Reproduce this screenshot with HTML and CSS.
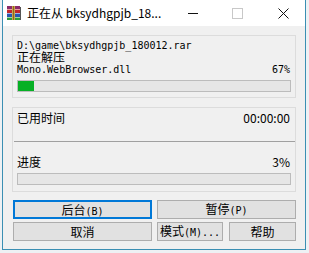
FILE: index.html
```html
<!DOCTYPE html>
<html lang="zh-CN">
<head>
    <meta charset="UTF-8">
    <title>正在从 bksydhgpjb_180012.rar 解压</title>
    <link rel="stylesheet" href="styles.css">
</head>
<body>
    <div class="window">
        <div class="titlebar">
            <svg class="app-icon" width="16" height="16" viewBox="0 0 16 16">
                <rect x="1" y="1" width="13" height="3" fill="#8a2a6a"/>
                <rect x="1" y="4" width="13" height="4" fill="#c0282c"/>
                <rect x="1" y="8" width="13" height="4" fill="#2a56b0"/>
                <rect x="1" y="12" width="13" height="3" fill="#2e9a3c"/>
                <rect x="1" y="4" width="13" height="1" fill="#e8a0a0"/>
                <rect x="1" y="8" width="13" height="1" fill="#9fb6e6"/>
                <rect x="1" y="12" width="13" height="1" fill="#9ed6a4"/>
                <rect x="6" y="1" width="3" height="14" fill="#c9a24a"/>
                <rect x="7" y="1" width="1" height="14" fill="#8a6a20"/>
                <rect x="14" y="2" width="1" height="13" fill="#555"/>
            </svg>
            <span class="title">正在从 bksydhgpjb_18...</span>
            <span class="ctl ctl-min"></span>
            <span class="ctl ctl-max"></span>
            <span class="ctl ctl-close">
                <svg width="11" height="11" viewBox="0 0 11 11"><path d="M0.5 0.5 L10.5 10.5 M10.5 0.5 L0.5 10.5" stroke="#111" stroke-width="1"/></svg>
            </span>
        </div>

        <div class="content">
            <div class="group group-file">
                <div class="mono line line-path">D:\game\bksydhgpjb_180012.rar</div>
                <div class="cn line-action">正在解压</div>
                <div class="mono line row">
                    <span>Mono.WebBrowser.dll</span>
                    <span>67%</span>
                </div>
                <div class="bar"><div class="fill" style="width: 6%"></div></div>
            </div>

            <div class="group group-total">
                <div class="row stat">
                    <span class="label">已用时间</span>
                    <span class="time">00:00:00</span>
                </div>
                <div class="sep"></div>
                <div class="row stat stat-progress">
                    <span class="label">进度</span>
                    <span class="time">3%</span>
                </div>
                <div class="bar"></div>
            </div>

            <div class="buttons">
                <button class="btn default">后台<span class="k">(B)</span></button>
                <button class="btn">暂停<span class="k">(P)</span></button>
                <button class="btn">取消</button>
                <div class="pair">
                    <button class="btn">模式<span class="k">(M)...</span></button>
                    <button class="btn">帮助</button>
                </div>
            </div>
        </div>
    </div>
</body>
</html>
```

FILE: styles.css
```css
body {
    margin: 0;
    background: #eef1f4;
    font-family: "Noto Sans CJK SC", sans-serif;
    color: #000;
}
.window {
    margin-left: 2px;
    width: 302px;
    height: 249px;
    background: #f0f0f0;
    border: 1px solid #3b8fb3;
    border-top: none;
}
.titlebar {
    height: 26px;
    background: #fff;
    display: flex;
    align-items: center;
    position: relative;
}
.app-icon {
    margin-left: 3px;
    margin-top: -1px;
}
.title {
    margin-left: 5px;
    font-size: 12px;
    line-height: 14px;
    color: #000;
}
.ctl {
    position: absolute;
}
.ctl-min {
    left: 185px;
    top: 13px;
    width: 10px;
    height: 1px;
    background: #111;
}
.ctl-max {
    left: 229px;
    top: 8px;
    width: 9px;
    height: 9px;
    border: 1px solid #c8c8c8;
}
.ctl-close {
    left: 275px;
    top: 8px;
    width: 11px;
    height: 11px;
}
.ctl-close svg {
    display: block;
}
.content {
    padding: 9px 9px 0 9px;
}
.group {
    border: 1px solid #dcdcdc;
    padding: 0 4px;
}
.group-file {
    padding-top: 5px;
    padding-bottom: 5px;
}
.mono {
    font-family: "DejaVu Sans Mono", "Noto Sans CJK SC", monospace;
    font-size: 10px;
}
.line {
    height: 12px;
    line-height: 12px;
}
.line-path {
    height: 10px;
    line-height: 10px;
}
.line-action {
    font-size: 12px;
    height: 13px;
    line-height: 12px;
}
.row {
    display: flex;
    justify-content: space-between;
    padding-right: 1px;
}
.bar {
    margin-top: 4px;
    height: 10px;
    background: #e6e6e6;
    border: 1px solid #bcbcbc;
}
.fill {
    height: 100%;
    background: #06b025;
}
.group-total {
    margin-top: 9px;
    padding-top: 2px;
    padding-bottom: 6px;
}
.stat {
    height: 16px;
    line-height: 16px;
    font-size: 12px;
}
.sep {
    margin: 15px -4px 0 -3px;
    height: 1px;
    background: #a0a0a0;
}
.stat-progress {
    margin-top: 12px;
}
.group-total .bar {
    margin-top: 3px;
}
.buttons {
    margin-top: 8px;
    display: grid;
    grid-template-columns: 139px 139px;
    column-gap: 5px;
    row-gap: 3px;
    padding-left: 1px;
}
.btn {
    height: 19px;
    margin: 0;
    padding: 0;
    background: #e1e1e1;
    border: 1px solid #adadad;
    font-family: "Noto Sans CJK SC", sans-serif;
    font-size: 12px;
    line-height: 16px;
    color: #000;
}
.btn.default {
    border: 2px solid #0078d7;
}
.k {
    font-family: "DejaVu Sans Mono", monospace;
    font-size: 10px;
}
.pair {
    display: grid;
    grid-template-columns: 66px 67px;
    column-gap: 6px;
}
```
